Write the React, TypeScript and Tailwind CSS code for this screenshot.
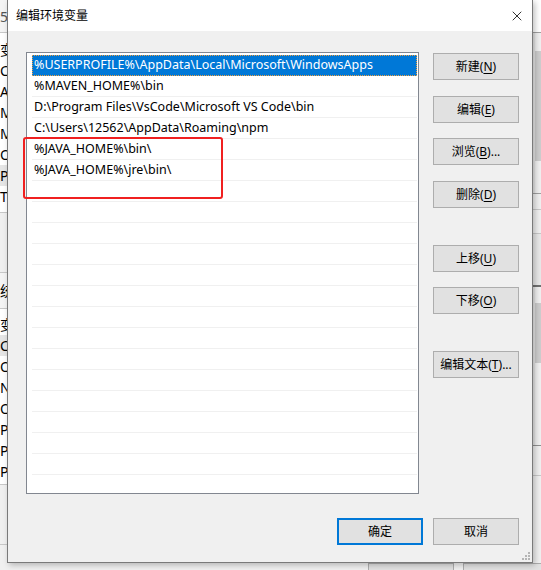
import { X } from "lucide-react";

const paths = [
  "%USERPROFILE%\\AppData\\Local\\Microsoft\\WindowsApps",
  "%MAVEN_HOME%\\bin",
  "D:\\Program Files\\VsCode\\Microsoft VS Code\\bin",
  "C:\\Users\\12562\\AppData\\Roaming\\npm",
  "%JAVA_HOME%\\bin\\",
  "%JAVA_HOME%\\jre\\bin\\",
];

const font = "font-['Segoe_UI','Noto_Sans','Noto_Sans_CJK_SC',sans-serif]";

function Btn({ label, hot, rest, className = "" }: { label: string; hot?: string; rest?: string; className?: string }) {
  return (
    <button
      className={`w-[86px] h-[27px] bg-[#e1e1e1] border border-[#adadad] text-[12px] text-black flex items-center justify-center leading-none ${className}`}
    >
      {label}
      {hot && (
        <span>
          (<span className="underline underline-offset-2">{hot}</span>){rest}
        </span>
      )}
    </button>
  );
}

export default function App() {
  const rows = Array.from({ length: 21 }, (_, i) => paths[i] ?? "");

  return (
    <div className={`relative w-[541px] h-[570px] overflow-hidden bg-[#f0f0f0] ${font}`}>
      {/* background window, left edge */}
      <div className="absolute left-0 top-0 w-[8px] h-[570px] bg-[#f0f0f0] text-[14px] text-black leading-none overflow-hidden">
        <div className="h-[33px] bg-[#f4f4f4] border-b border-[#c8c8c8] pt-[10px] text-[#555]">56</div>
        <div className="bg-white pt-[6px] pb-[5px] border-b border-[#c8c8c8]">
          {["变", "CL", "A", "M", "M", "O", "Pa", "TE"].map((t, i) => (
            <div key={i} className={`h-[21px] flex items-center ${i === 6 ? "bg-[#e5e5e5]" : ""}`}>{t}</div>
          ))}
        </div>
        <div className="h-[60px] border-b border-[#c8c8c8]" />
        <div className="h-[36px] flex items-center border-b border-[#c8c8c8] bg-[#f4f4f4]">统</div>
        <div className="bg-white pt-[5px] pb-[2px] border-b border-[#c8c8c8]">
          {["变", "Co", "Or", "N", "OS", "Pa", "PA", "PR"].map((t, i) => (
            <div key={i} className={`h-[21px] flex items-center ${i === 1 ? "bg-[#e5e5e5]" : ""}`}>{t}</div>
          ))}
        </div>
        <div className="h-[60px] border-b border-[#c8c8c8]" />
      </div>

      {/* background window, right edge */}
      <div className="absolute right-0 top-0 w-[8px] h-[570px] bg-[#f0f0f0] flex flex-col">
        <div className="h-[33px] bg-white border-b border-[#a0a0a0]" />
        <div className="h-[160px] flex">
          <div className="w-[2px] bg-[#e6e6e6]" />
          <div className="w-[6px] bg-[#cdcdcd] mt-[18px] h-[110px]" />
        </div>
        <div className="h-[16px] border-t border-[#a0a0a0]" />
        <div className="h-[24px] border-t border-[#c8c8c8]" />
        <div className="h-[52px] border-t border-[#c8c8c8] bg-[#e8e8e8]" />
        <div className="h-[160px] border-t-2 border-[#707070] flex">
          <div className="w-[2px] bg-[#e6e6e6]" />
          <div className="w-[6px] bg-[#cdcdcd] mt-[16px] h-[60px]" />
        </div>
        <div className="h-[30px] border-t border-[#909090]" />
        <div className="flex-1 border-t border-[#c8c8c8]" />
      </div>

      {/* background window, bottom buttons */}
      <div className="absolute left-[368px] top-[563px] w-[86px] h-[20px] bg-[#e1e1e1] border border-[#adadad]" />
      <div className="absolute left-[463px] top-[563px] w-[86px] h-[20px] bg-[#e1e1e1] border border-[#adadad]" />

      {/* dialog */}
      <div className="absolute left-[7px] top-0 w-[526px] h-[563px] bg-[#f0f0f0] border border-[#7a7a7a] border-t-0 shadow-[2px_2px_6px_rgba(0,0,0,0.25)] flex flex-col">
        <div className="h-[31px] bg-white flex items-center justify-between pl-[8px] pr-[7px]">
          <span className="text-[12px] text-black">编辑环境变量</span>
          <X size={16} strokeWidth={1.2} className="text-black" />
        </div>

        <div className="flex pl-[18px] pt-[21px]">
          <div className="w-[393px] h-[442px] bg-white border border-[#828790] pt-[2px] pl-[5px] pr-[1px] overflow-hidden">
            {rows.map((p, i) => (
              <div
                key={i}
                className={`h-[21px] flex items-center pl-[2px] text-[12.5px] whitespace-nowrap ${
                  i === 0
                    ? "bg-[#0078d7] text-white outline outline-1 outline-dotted outline-[#f0a040] -outline-offset-1"
                    : "text-black border-b border-[#f0f0f0]"
                }`}
              >
                {p}
              </div>
            ))}
          </div>

          <div className="flex flex-col ml-[14px] pt-[1px]">
            <Btn label="新建" hot="N" />
            <Btn label="编辑" hot="E" className="mt-[16px]" />
            <Btn label="浏览" hot="B" rest="..." className="mt-[15px]" />
            <Btn label="删除" hot="D" className="mt-[16px]" />
            <Btn label="上移" hot="U" className="mt-[37px]" />
            <Btn label="下移" hot="O" className="mt-[15px]" />
            <Btn label="编辑文本" hot="T" rest="..." className="mt-[37px]" />
          </div>
        </div>

        <div className="flex justify-end gap-[10px] pr-[13px] mt-[24px]">
          <button className="w-[86px] h-[27px] bg-[#e1e1e1] border-2 border-[#0078d7] text-[12px] text-black">确定</button>
          <button className="w-[86px] h-[27px] bg-[#e1e1e1] border border-[#adadad] text-[12px] text-black">取消</button>
        </div>

        {/* resize grip */}
        <div className="absolute right-[2px] bottom-[2px] grid grid-cols-3 gap-[1px]">
          {[0, 0, 1, 0, 1, 1, 1, 1, 1].map((v, i) => (
            <div key={i} className={`w-[2px] h-[2px] ${v ? "bg-[#b5b5b5]" : ""}`} />
          ))}
        </div>
      </div>

      {/* red highlight box */}
      <div className="absolute left-[23px] top-[137px] w-[200px] h-[62px] border-2 border-[#f02020] rounded-[3px]" />
    </div>
  );
}
